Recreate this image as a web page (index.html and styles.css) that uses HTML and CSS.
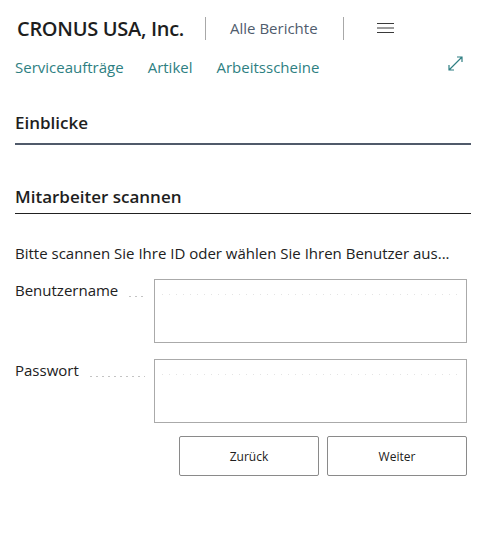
FILE: index.html
```html
<!DOCTYPE html>
<html lang="de">
<head>
<meta charset="utf-8">
<link rel="stylesheet" href="styles.css">
</head>
<body>
<div class="page">
  <header class="topbar">
    <div class="company">CRONUS USA, Inc.</div>
    <div class="sep sep1"></div>
    <div class="reports">Alle Berichte</div>
    <div class="sep sep2"></div>
    <div class="menu">
      <svg width="17" height="12" viewBox="0 0 17 12"><path d="M0 1.5H17M0 6H17M0 10.5H17" stroke="#3a3a3a" stroke-width="1" fill="none"/></svg>
    </div>
  </header>
  <nav class="navrow">
    <a class="navlink">Serviceaufträge</a>
    <a class="navlink">Artikel</a>
    <a class="navlink">Arbeitsscheine</a>
    <span class="expand">
      <svg width="15" height="15" viewBox="0 0 15 15"><path d="M1 14L14 1M9 1H14V6M1 9V14H6" stroke="#2f7f83" stroke-width="1.2" fill="none"/></svg>
    </span>
  </nav>
  <section class="section insights">
    <h2 class="section-title">Einblicke</h2>
  </section>
  <section class="section scan">
    <h2 class="section-title">Mitarbeiter scannen</h2>
  </section>
  <p class="instr">Bitte scannen Sie Ihre ID oder wählen Sie Ihren Benutzer aus...</p>
  <div class="field">
    <div class="label"><span>Benutzername</span><span class="leader"></span></div>
    <div class="input"><div class="inner-line"></div></div>
  </div>
  <div class="field">
    <div class="label"><span>Passwort</span><span class="leader"></span></div>
    <div class="input"><div class="inner-line"></div></div>
  </div>
  <div class="actions">
    <button class="btn">Zurück</button>
    <button class="btn">Weiter</button>
  </div>
</div>
</body>
</html>
```
FILE: styles.css
```css
html, body { margin: 0; padding: 0; background: #fff; }
body { font-family: "Open Sans", "Noto Sans", sans-serif; color: #212121; }
.page { padding: 0 26px 0 15px; width: 456px; }
.topbar { display: flex; align-items: center; height: 26px; margin-top: 15px; padding-left: 2px; }
.company { font-size: 20px; font-weight: 600; letter-spacing: -0.3px; color: #1e1e1e; }
.sep { width: 1px; height: 23px; background: #a8a8a8; }
.sep1 { margin: 0 24px 0 21px; }
.sep2 { margin: 0 33px 0 25px; }
.reports { font-size: 15px; color: #505c6d; }
.menu { display: flex; align-items: center; }
.navrow { display: flex; align-items: center; margin-top: 15px; height: 22px; }
.navlink { font-size: 15px; color: #2e7f82; margin-right: 24px; }
.expand { margin-left: auto; display: flex; margin-right: 8px; margin-top: -7px; }
.section-title { margin: 0; font-size: 17px; font-weight: 600; color: #1e1e1e; line-height: 24px; }
.insights { margin-top: 33px; border-bottom: 2px solid #505a6a; padding-bottom: 8px; }
.scan { margin-top: 40px; border-bottom: 1px solid #212121; padding-bottom: 4px; }
.instr { margin: 29px 0 0; font-size: 15px; line-height: 20px; }
.field { display: flex; margin-top: 16px; margin-right: 4px; }
.field + .field { margin-top: 16px; }
.label { width: 139px; display: flex; align-items: flex-start; font-size: 15px; line-height: 20px; margin-top: 1px; }
.leader { flex: 1; height: 20px; margin: 0 9px 0 9px;
  background-image: radial-gradient(circle, #c4c4c4 0.7px, transparent 1px);
  background-size: 6px 3px; background-repeat: repeat-x; background-position: left 15px; }
.input { flex: 1; height: 62px; border: 1px solid #aaaaaa; padding: 0 4px; }
.inner-line { height: 16px;
  background-image: radial-gradient(circle, #e4e4e4 0.7px, transparent 1px);
  background-size: 7px 3px; background-repeat: repeat-x; background-position: left 13px; }
.actions { display: flex; justify-content: flex-end; gap: 8px; margin-top: 13px; padding-right: 4px; }
.btn { width: 140px; height: 40px; background: #fff; border: 1px solid #8a8a8a; border-radius: 2px;
  font-family: "Open Sans", "Noto Sans", sans-serif; font-size: 12px; color: #212121; padding: 0; }
```
